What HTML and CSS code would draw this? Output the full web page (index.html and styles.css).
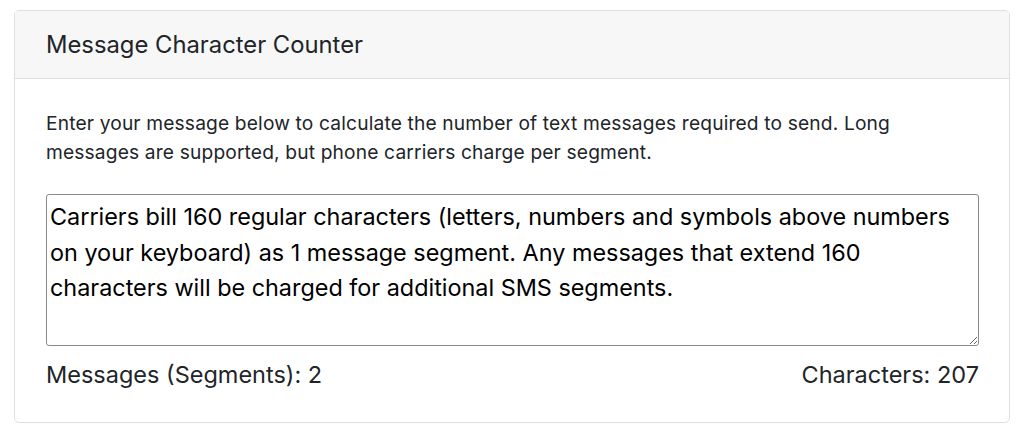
FILE: index.html
```html
<!DOCTYPE html>
<html>
<head>
<meta charset="utf-8">
<link rel="stylesheet" href="styles.css">
</head>
<body>
<div class="card">
  <div class="card-header">Message Character Counter</div>
  <div class="card-body">
    <p class="intro">Enter your message below to calculate the number of text messages required to send. Long messages are supported, but phone carriers charge per segment.</p>
    <textarea class="message">Carriers bill 160 regular characters (letters, numbers and symbols above numbers on your keyboard) as 1 message segment. Any messages that extend 160 characters will be charged for additional SMS segments.</textarea>
    <div class="stats">
      <span>Messages (Segments): 2</span>
      <span>Characters: 207</span>
    </div>
  </div>
</div>
</body>
</html>
```
FILE: styles.css
```css
* { box-sizing: border-box; }
body {
  margin: 0;
  background: #fff;
  font-family: Inter, "Liberation Sans", sans-serif;
  color: #212529;
}
.card {
  margin: 10px 0 0 14px;
  width: 996px;
  border: 1px solid #dfdfdf;
  border-radius: 5px;
  overflow: hidden;
}
.card-header {
  height: 68px;
  display: flex;
  align-items: center;
  padding: 0 31px;
  background: #f7f7f7;
  border-bottom: 1px solid #dfdfdf;
  font-size: 23.8px;
}
.card-body {
  padding: 30px 30px 30px 31px;
}
.intro {
  margin: 0 0 27px 0;
  font-size: 19.2px;
  line-height: 29px;
  letter-spacing: 0.15px;
}
.message {
  display: block;
  width: 933px;
  height: 152px;
  padding: 4px 3px 2px 3px;
  border: 1px solid #8a8a8a;
  border-radius: 3px;
  font-family: Inter, "Liberation Sans", sans-serif;
  font-size: 23.4px;
  line-height: 35.5px;
  color: #000;
  resize: vertical;
}
.stats {
  display: flex;
  justify-content: space-between;
  margin-top: 11px;
  font-size: 23.5px;
  line-height: 35px;
}
```
